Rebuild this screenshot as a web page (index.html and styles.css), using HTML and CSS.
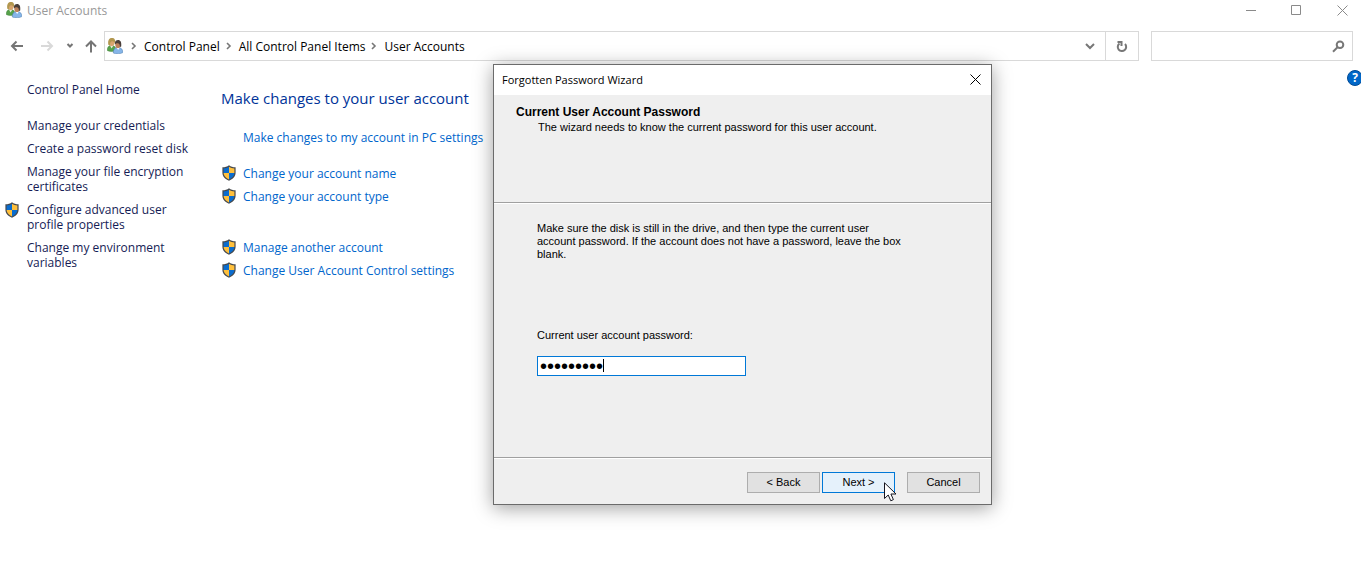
FILE: index.html
```html
<!DOCTYPE html>
<html lang="en">
<head>
<meta charset="utf-8">
<title>User Accounts</title>
<link rel="stylesheet" href="styles.css">
</head>
<body>
<svg class="defs" aria-hidden="true">
  <symbol id="shield" viewBox="0 0 14 16">
    <path d="M7 .2C5.200 1.600 3 2.200.4 2.300V7.500C.4 11.500 3 14 7 15.800C11 14 13.600 11.500 13.600 7.500V2.300C11 2.200 8.800 1.600 7 .2Z" fill="#46494d"/>
    <path d="M7 1.700C5.400 2.800 3.600 3.300 1.600 3.500V8H7Z" fill="#0a6cce"/>
    <path d="M7 1.700C8.600 2.800 10.400 3.300 12.400 3.500V8H7Z" fill="#ffc03c"/>
    <path d="M1.600 8C1.800 11 3.800 13 7 14.500V8Z" fill="#ffc03c"/>
    <path d="M12.400 8C12.200 11 10.200 13 7 14.500V8Z" fill="#0a6cce"/>
  </symbol>
  <symbol id="users" viewBox="0 0 16 16">
    <path d="M.3 12.500C.2 9.300 1.500 7.500 4.500 7.500S9 9.300 9 12.500C6.500 13.700 2.500 13.700.3 12.500Z" fill="#56a24a" stroke="#397a35" stroke-width=".5"/>
    <path d="M3 7.500L4.500 10.500L6.500 7.500Z" fill="#eee8dd"/>
    <ellipse cx="4.800" cy="4.300" rx="2.800" ry="3.700" fill="#d9a56e"/>
    <path d="M1.300 6.800C.6 1.800 2.500.1 5 .1S8.800 2 8.200 6C7.500 4.300 6.500 3.500 5.200 3.300C3.800 3.300 3 4.300 2.900 7.600Z" fill="#b2974f"/>
    <path d="M6.300 15C6.200 11.500 7.600 9.500 11 9.500S15.800 11.500 15.800 14.600C13.500 16 8.500 16.200 6.300 15Z" fill="#86b5e8" stroke="#4779ad" stroke-width=".5"/>
    <path d="M9.500 9.500L11.200 12L12.800 9.500Z" fill="#fff"/>
    <ellipse cx="10.900" cy="6.700" rx="2.600" ry="3.400" fill="#bd825b"/>
    <path d="M7.900 6.500C7.600 3.200 9 1.900 11.200 1.900S14.800 4 14.200 8.400L12.900 9C13 7 12.600 5.900 11.500 5.400C9.900 5.200 8.900 5.500 7.900 6.500Z" fill="#493e39"/>
  </symbol>
  <symbol id="sep" viewBox="0 0 6 8"><path d="M1 1L4 4L1 7" fill="none" stroke="#777" stroke-width="1.600"/></symbol>
</svg>

<div class="window">
  <header class="titlebar">
    <svg class="users"><use href="#users"/></svg>
    <span class="title">User Accounts</span>
    <button class="caption" aria-label="Minimize"><svg viewBox="0 0 11 11"><path d="M1 5.500H11"/></svg></button>
    <button class="caption" aria-label="Maximize"><svg viewBox="0 0 11 11"><path d="M.5.500H9.500V9.500H.5Z"/></svg></button>
    <button class="caption" aria-label="Close"><svg viewBox="0 0 11 11"><path d="M.5.500L10.500 10.500M10.500.5L.5 10.500"/></svg></button>
  </header>

  <nav class="toolbar" aria-label="Navigation">
    <div class="arrows">
      <button aria-label="Back"><svg width="14" height="12" viewBox="0 0 14 12"><path d="M13 6H2M6.500 1.500L2 6L6.500 10.500"/></svg></button>
      <button class="off" aria-label="Forward" disabled><svg width="14" height="12" viewBox="0 0 14 12"><path d="M1 6H12M7.500 1.500L12 6L7.500 10.500"/></svg></button>
      <button aria-label="Recent locations"><svg width="8" height="12" viewBox="0 0 8 12"><path d="M1.500 4L4 6.500L6.500 4"/></svg></button>
      <button aria-label="Up"><svg width="12" height="14" viewBox="0 0 12 14"><path d="M6 13.500V3M1 7.500L6 2.500L11 7.500"/></svg></button>
    </div>
    <div class="address">
      <svg class="users"><use href="#users"/></svg>
      <svg class="sep"><use href="#sep"/></svg>
      <a href="#">Control Panel</a>
      <svg class="sep"><use href="#sep"/></svg>
      <a href="#">All Control Panel Items</a>
      <svg class="sep"><use href="#sep"/></svg>
      <a href="#">User Accounts</a>
      <button class="history" aria-label="Previous locations"><svg width="10" height="8" viewBox="0 0 10 8"><path d="M1 2L5 6L9 2"/></svg></button>
      <button class="refresh" aria-label="Refresh"><svg width="12" height="13" viewBox="0 0 12 13"><path d="M3.500 3.500A4.200 4.200 0 1 0 9 4M1.500 2H5.500V6"/></svg></button>
    </div>
    <div class="search">
      <input type="search" aria-label="Search Control Panel">
      <svg width="13" height="13" viewBox="0 0 13 13"><circle cx="8" cy="4.800" r="3.300"/><path d="M5.500 7.300L1 11.800"/></svg>
    </div>
  </nav>

  <div class="content">
    <aside class="side">
      <a class="home" href="#">Control Panel Home</a>
      <a href="#">Manage your credentials</a>
      <a href="#">Create a password reset disk</a>
      <a href="#">Manage your file encryption certificates</a>
      <a class="guarded" href="#"><svg class="shield"><use href="#shield"/></svg><span>Configure advanced user profile properties</span></a>
      <a href="#">Change my environment variables</a>
    </aside>
    <main class="main">
      <h1>Make changes to your user account</h1>
      <ul class="tasks">
        <li><a href="#">Make changes to my account in PC settings</a></li>
      </ul>
      <ul class="tasks">
        <li><svg class="shield"><use href="#shield"/></svg><a href="#">Change your account name</a></li>
        <li><svg class="shield"><use href="#shield"/></svg><a href="#">Change your account type</a></li>
      </ul>
      <ul class="tasks last">
        <li><svg class="shield"><use href="#shield"/></svg><a href="#">Manage another account</a></li>
        <li><svg class="shield"><use href="#shield"/></svg><a href="#">Change User Account Control settings</a></li>
      </ul>
    </main>
    <button class="help" aria-label="Help">?</button>
  </div>
</div>

<section class="dialog" role="dialog" aria-labelledby="dialog-title">
  <header class="dialog-bar">
    <span id="dialog-title">Forgotten Password Wizard</span>
    <button aria-label="Close"><svg width="11" height="11" viewBox="0 0 11 11"><path d="M.5.500L10.500 10.500M10.500.5L.5 10.500"/></svg></button>
  </header>
  <div class="intro">
    <h2>Current User Account Password</h2>
    <p>The wizard needs to know the current password for this user account.</p>
  </div>
  <form class="step">
    <p>Make sure the disk is still in the drive, and then type the current user account password. If the account does not have a password, leave the box blank.</p>
    <label for="password">Current user account password:</label>
    <div class="field">
      <input id="password" type="password" value="secret123">
      <span class="caret"></span>
    </div>
  </form>
  <footer class="actions">
    <button>&lt; Back</button>
    <button class="next">Next &gt;
      <svg class="cursor" width="13" height="20" viewBox="0 0 13 20"><path d="M.5.800V16.500L4.200 13L6.800 18.800L9.400 17.600L6.900 12H12Z"/></svg>
    </button>
    <button class="cancel">Cancel</button>
  </footer>
</section>
</body>
</html>
```
FILE: styles.css
```css
* { box-sizing: border-box; }
body {
  margin: 0;
  min-height: 100vh;
  overflow: hidden;
  position: relative;
  background: #fff;
  font: 12px/15px "Open Sans", "Noto Sans", sans-serif;
  color: #000;
}
button, input { font: inherit; }
button { padding: 0; border: 0; background: none; color: inherit; }
a { color: inherit; text-decoration: none; }
h1, h2, p, ul { margin: 0; padding: 0; }
ul { list-style: none; }
svg { display: block; flex: none; }
.defs { position: absolute; width: 0; height: 0; }
.users { width: 16px; height: 16px; }
.shield { width: 14px; height: 16px; }

.titlebar { display: flex; align-items: center; height: 20px; padding: 0 13px 0 6px; color: #999; }
.title { flex: 1; margin-left: 5px; }
.caption { width: 11px; margin-left: 35px; }
.caption svg { width: 11px; height: 11px; fill: none; stroke: #8a8a8a; }

.toolbar { display: flex; height: 30px; margin: 11px 8px 0 0; }
.arrows { display: flex; align-items: center; width: 104px; padding-left: 10px; }
.arrows button { display: flex; }
.arrows button + button { margin-left: 16px; }
.arrows button:nth-child(3) { margin-left: 12px; }
.arrows button:last-child { margin-left: 11px; }
.arrows svg { fill: none; stroke: #757575; stroke-width: 2; }
.arrows .off svg { stroke: #d9d9d9; }
.address { display: flex; align-items: center; flex: 1; border: 1px solid #d9d9d9; padding-left: 2px; }
.address .sep { width: 6px; height: 8px; margin: 0 7px 0 6px; }
.address .users + .sep { margin-left: 8px; }
.address button { display: flex; align-items: center; justify-content: center; align-self: stretch; }
.address button svg { fill: none; stroke: #777; stroke-width: 2; }
.history { width: 30px; margin-left: auto; }
.address .refresh { width: 33px; border-left: 1px solid #d9d9d9; }
.search { display: flex; align-items: center; width: 202px; margin-left: 12px; padding-right: 7px; border: 1px solid #d9d9d9; }
.search input { flex: 1; min-width: 0; height: 26px; border: 0; outline: 0; }
.search svg { fill: none; stroke: #777; stroke-width: 2; }

.content { display: flex; align-items: flex-start; }
.side { display: flex; flex-direction: column; gap: 8px; width: 221px; padding: 21px 30px 0 27px; color: #151c55; }
.home { margin-bottom: 13px; }
.guarded { display: flex; gap: 8px; margin-left: -22px; }
.main { flex: 1; padding-top: 27px; }
.main h1 { font-size: 15px; line-height: 20px; font-weight: 400; color: #003399; }
.tasks { margin-top: 21px; color: #0066cc; }
.tasks + .tasks { margin-top: 20px; }
.tasks.last { margin-top: 35px; }
.tasks li { display: flex; align-items: center; height: 16px; padding-left: 1px; }
.tasks li + li { margin-top: 7px; }
.tasks a { margin-left: 7px; }
.tasks a:first-child { margin-left: 21px; }
.help {
  width: 16px; height: 16px; margin: 9px -2px 0 0; border: 1px solid #004a95; border-radius: 8px;
  background: #0067c8; color: #fff; font-weight: 700; line-height: 14px;
}

.dialog {
  position: absolute; left: 493px; top: 64px; width: 499px;
  border: 1px solid #6b6b6b; background: #efefef;
  box-shadow: 0 3px 18px rgba(0, 0, 0, .38);
  font: 11px/13px "Liberation Sans", Arial, sans-serif;
}
.dialog-bar { display: flex; align-items: center; justify-content: space-between; height: 30px; padding: 0 10px 2px 8px; background: #fff; font: 11px/15px "Open Sans", sans-serif; }
.dialog-bar svg { fill: none; stroke: #000; }
.intro { height: 108px; padding: 10px 22px; border-bottom: 1px solid #a0a0a0; }
.intro h2 { font-size: 12px; line-height: 15px; }
.intro p { margin-left: 22px; line-height: 15px; }
.step { height: 255px; padding: 18px 84px 0 43px; border-top: 1px solid #fff; border-bottom: 1px solid #a0a0a0; }
.step label { display: block; margin-top: 68px; }
.field { position: relative; width: 209px; margin-top: 14px; }
.field input { display: block; width: 100%; height: 20px; padding: 0 2px; border: 1px solid #0078d7; outline: 0; background: #fff; font: 20px/18px "Liberation Sans", sans-serif; }
.caret { position: absolute; left: 66px; top: 3px; width: 1px; height: 13px; background: #000; }
.actions { display: flex; justify-content: flex-end; gap: 2px; padding: 13px 11px 11px; border-top: 1px solid #fff; }
.actions button { position: relative; width: 73px; height: 21px; border: 1px solid #adadad; background: #e1e1e1; }
.actions .next { border-color: #0078d7; background: #e5f1fb; }
.actions .cancel { margin-left: 10px; }
.cursor { position: absolute; left: 61px; top: 9px; fill: #fff; stroke: #15151f; }
```
